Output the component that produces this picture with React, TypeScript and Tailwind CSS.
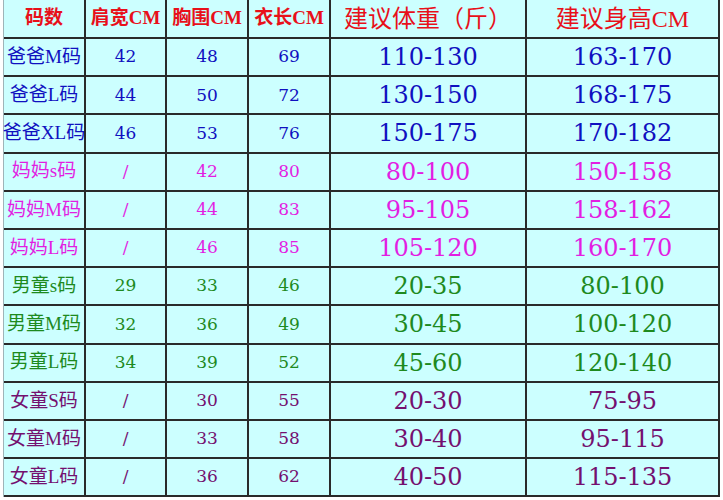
const FONT = "font-['Liberation_Serif','Noto_Sans_CJK_SC',serif]";
const NUM = "font-['DejaVu_Serif','Noto_Sans_CJK_SC',serif]";

type Row = { name: string; cells: string[]; color: string };

const headers = ["码数", "肩宽CM", "胸围CM", "衣长CM", "建议体重（斤）", "建议身高CM"];

const rows: Row[] = [
  { name: "爸爸M码", cells: ["42", "48", "69", "110-130", "163-170"], color: "text-[#1010c0]" },
  { name: "爸爸L码", cells: ["44", "50", "72", "130-150", "168-175"], color: "text-[#1010c0]" },
  { name: "爸爸XL码", cells: ["46", "53", "76", "150-175", "170-182"], color: "text-[#1010c0]" },
  { name: "妈妈s码", cells: ["/", "42", "80", "80-100", "150-158"], color: "text-[#e21ee2]" },
  { name: "妈妈M码", cells: ["/", "44", "83", "95-105", "158-162"], color: "text-[#e21ee2]" },
  { name: "妈妈L码", cells: ["/", "46", "85", "105-120", "160-170"], color: "text-[#e21ee2]" },
  { name: "男童s码", cells: ["29", "33", "46", "20-35", "80-100"], color: "text-[#1e8a1e]" },
  { name: "男童M码", cells: ["32", "36", "49", "30-45", "100-120"], color: "text-[#1e8a1e]" },
  { name: "男童L码", cells: ["34", "39", "52", "45-60", "120-140"], color: "text-[#1e8a1e]" },
  { name: "女童S码", cells: ["/", "30", "55", "20-30", "75-95"], color: "text-[#74106f]" },
  { name: "女童M码", cells: ["/", "33", "58", "30-40", "95-115"], color: "text-[#74106f]" },
  { name: "女童L码", cells: ["/", "36", "62", "40-50", "115-135"], color: "text-[#74106f]" },
];

export default function App() {
  return (
    <div className={`w-[723px] h-[500px] bg-white overflow-hidden ${FONT}`}>
      <div className="ml-[3px] w-[717px] border-l border-[#9fb4b8] bg-[#ccffff]">
        <div className="grid grid-cols-[80px_79px_80px_80px_194px_191px] grid-rows-[37px_repeat(12,36.2px)] gap-[2px] bg-[#2a2a2a] border-r-2 border-b-2 border-[#2a2a2a] w-[716px]">
          {headers.map((h, i) => (
            <div
              key={h}
              className={`bg-[#ccffff] flex items-center justify-center whitespace-nowrap text-[#e8101a] ${
                i < 4 ? "text-[19px] font-bold" : "text-[24px]"
              }`}
            >
              {h}
            </div>
          ))}
          {rows.map((r) => (
            <>
              <div
                key={r.name}
                className={`bg-[#ccffff] flex items-center justify-center whitespace-nowrap text-[19px] ${r.color}`}
              >
                {r.name}
              </div>
              {r.cells.map((c, j) => (
                <div
                  key={r.name + j}
                  className={`bg-[#ccffff] flex items-center justify-center whitespace-nowrap ${NUM} ${r.color} ${
                    j < 3 ? "text-[17px]" : "text-[24px]"
                  }`}
                >
                  {c}
                </div>
              ))}
            </>
          ))}
        </div>
      </div>
    </div>
  );
}
